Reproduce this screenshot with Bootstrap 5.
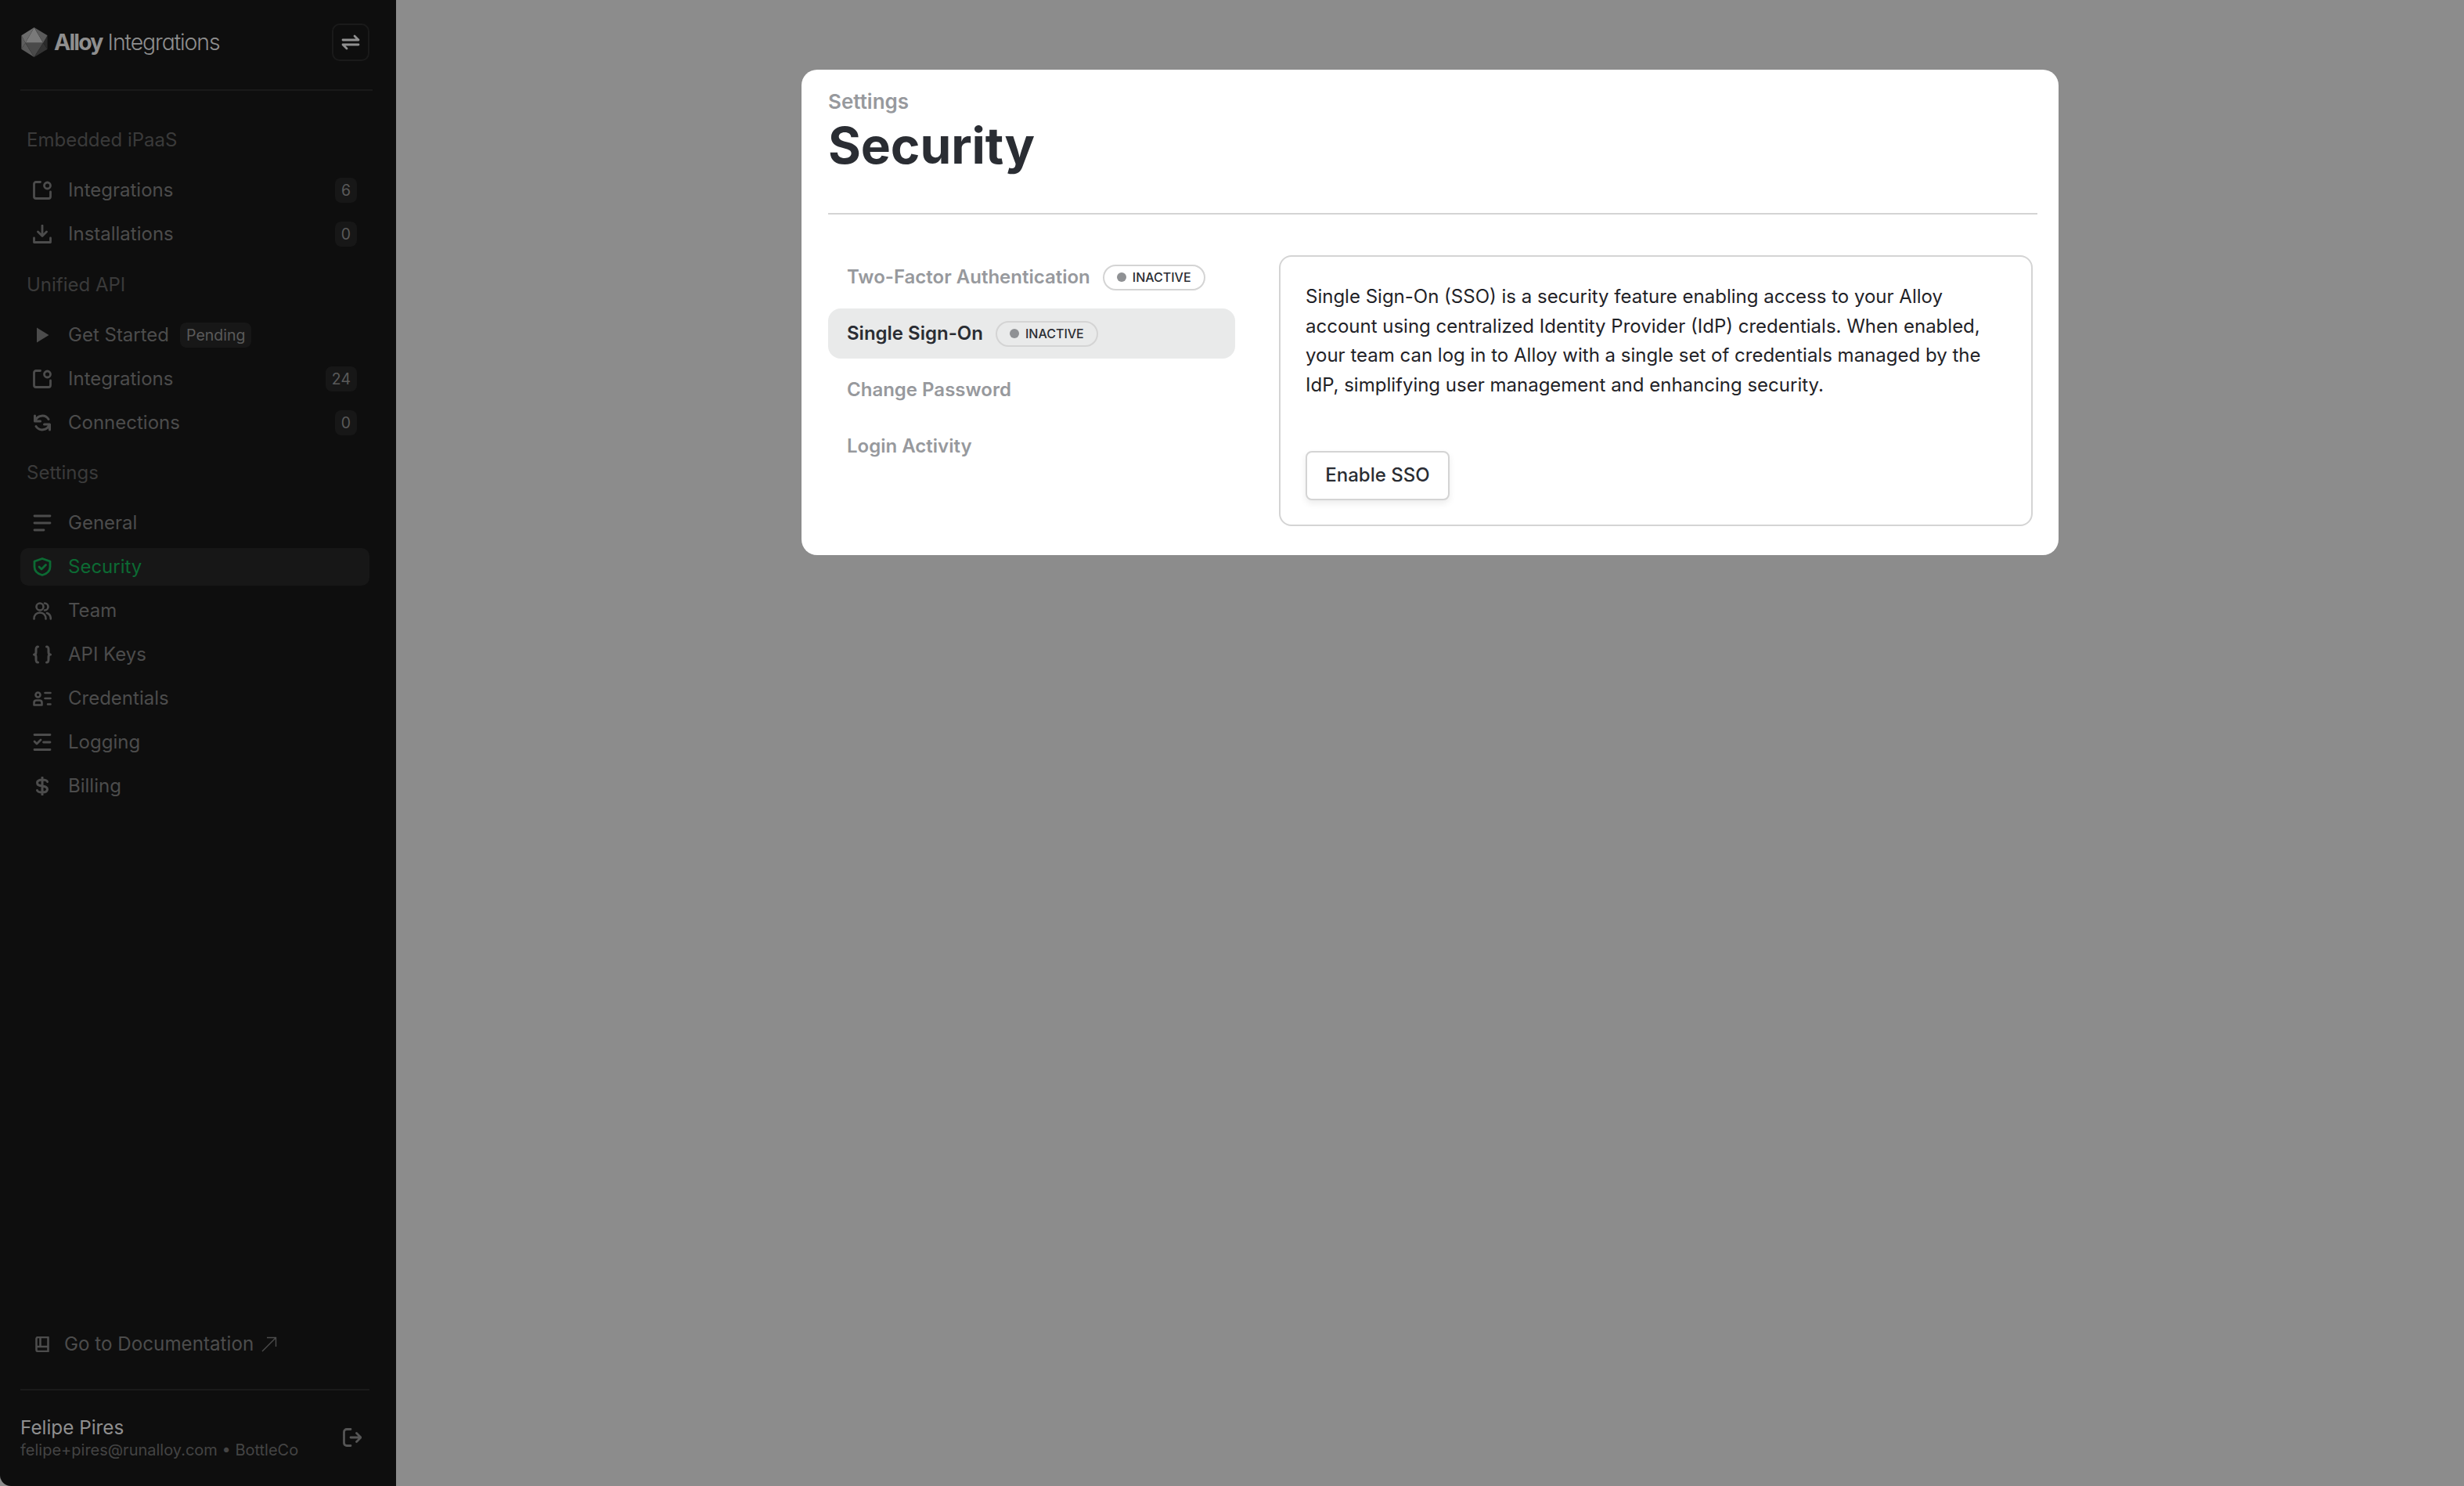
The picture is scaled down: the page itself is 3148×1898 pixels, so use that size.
<!DOCTYPE html>
<html lang="en">
<head>
  <meta charset="UTF-8">
  <title>Security - Alloy Integrations</title>
  <link href="https://cdn.jsdelivr.net/npm/bootstrap@5.3.0/dist/css/bootstrap.min.css" rel="stylesheet">
  <style>
    html, body { height: 100%; }
    body { background: #8c8c8c; font-family: Inter, "Liberation Sans", sans-serif; color: #2a2d33; overflow: hidden; }
    .shell { height: 100vh; }

    .side { width: 506px; background: #0e0e0e; padding: 30px 34px 0 26px; flex-shrink: 0; border-bottom-left-radius: 14px; }
    .brand { height: 48px; }
    .brand-logo { margin-left: 1px; }
    .brand-name { font-size: 28.4px; letter-spacing: -1.1px; color: #8f8f8f; line-height: 1; margin-left: 8px; font-feature-settings: "cv11"; }
    .brand-name b { font-weight: 700; color: #8f8f8f; letter-spacing: -1.8px; }
    .brand-name span { font-weight: 300; margin-left: 7px; }
    .swap-btn { width: 48px; height: 48px; border: 2px solid #1a1a1a; border-radius: 10px; color: #8f8f8f; padding: 0; }
    .side-rule { height: 2px; background: #1a1a1a; margin: 36px -4px 0 0; }
    .side-rule-low { height: 2px; background: #1a1a1a; }

    .group-label { font-size: 24px; line-height: 32px; color: #3a3a3a; padding-left: 8px; margin-bottom: 24px; }
    .group-label.first { margin-top: 47px; }
    .group-label.next { margin-top: 17px; }
    .group-label.last { margin-top: 16px; }
    .side-link { height: 48px; margin-bottom: 8px; padding: 0 16px; border-radius: 10px; color: #4c4c4c; font-size: 24px; gap: 21px; text-decoration: none; }
    .side-link svg { width: 24px; height: 24px; flex-shrink: 0; }
    .side-link.on { background: #171717; color: #0c6a33; }
    .count { background: #171717; color: #5a5a5a; font-size: 19.5px; font-weight: 400; line-height: 32px; height: 32px; padding: 0 8px; border-radius: 8px; }
    .count.tag { margin-left: -7px; }
    .doc-link { color: #4c4c4c; font-size: 24.2px; padding-left: 19px; gap: 19px; margin-bottom: 39px; text-decoration: none; }
    .doc-link svg.book { width: 18px; height: 20px; }
    .doc-link svg.arrow { width: 20px; height: 20px; margin-left: -9px; }
    .who { padding-top: 31px; height: 122px; }
    .who-name { font-size: 24.3px; line-height: 32px; color: #8f8f8f; }
    .who-mail { font-size: 20px; line-height: 26px; color: #444; }
    .logout { width: 24px; height: 24px; color: #555; margin-right: 10px; margin-top: 17px; }

    .dialog { width: 1606px; height: 620px; margin: 89px 0 0 518px; border: 0; border-radius: 20px; padding: 23px 27px 0 34px; }
    .crumb { font-size: 26px; line-height: 36px; font-weight: 600; color: #97999d; }
    .page-title { font-size: 64px; line-height: 76px; font-weight: 700; color: #2a2d33; margin: 0; letter-spacing: -.1px; }
    .dialog-rule { height: 2px; background: #d4d4d4; margin: 48px 0 52px; }
    .tabs-col { width: 520px; flex-shrink: 0; margin-right: 56px; margin-top: -4px; }
    .tab-row { height: 64px; margin-bottom: 8px; padding: 0 24px; border-radius: 16px; font-size: 24px; font-weight: 600; color: #97999d; gap: 16px; text-decoration: none; }
    .tab-row.on { background: #e9eaea; color: #2a2d33; }
    .state-pill { height: 33px; border: 2px solid #d4d4d4; border-radius: 17px; padding: 0 16px; font-size: 16px; font-weight: 500; color: #2a2d33; gap: 8px; background: transparent; }
    .state-dot { width: 12px; height: 12px; border-radius: 50%; background: #8f9194; }
    .sso-box { width: 963px; height: 346px; border: 2px solid #d4d4d4; border-radius: 16px; padding: 32px; }
    .sso-box p { font-size: 24px; line-height: 37.6px; color: #1f2227; margin: 0 0 66px; }
    .enable-btn { height: 63px; width: 184px; padding: 0 0 2px; font-size: 24px; font-weight: 500; color: #2a2d33; border: 2px solid #d4d4d4; border-radius: 8px; box-shadow: 0 4px 8px rgba(0,0,0,.08); background: #fff; }
  </style>
</head>
<body>
  <svg width="0" height="0" class="position-absolute">
    <symbol id="ic-box" viewBox="0 0 24 24"><path d="M9.500 1.500H4A2.500 2.500 0 0 0 1.500 4v16A2.500 2.500 0 0 0 4 22.500h16a2.500 2.500 0 0 0 2.500-2.500v-6" fill="none" stroke="currentColor" stroke-width="2.800" stroke-linecap="round"/><circle cx="18.500" cy="6" r="4" fill="none" stroke="currentColor" stroke-width="2.800"/></symbol>
  </svg>
  <div class="shell d-flex">
    <aside class="side d-flex flex-column">
      <div class="brand d-flex align-items-center justify-content-between">
        <div class="d-flex align-items-center">
          <svg class="brand-logo" width="34" height="38" viewBox="10 10 98 112">
            <path d="M58 10 25 68H92Z" fill="#7a7a7a"/>
            <path d="M58 10 10 40 25 68Z" fill="#6c6c6c"/>
            <path d="M10 40 25 68 10 92Z" fill="#5f5f5f"/>
            <path d="M10 92 25 68 58 122Z" fill="#5a5a5a"/>
            <path d="M25 68H92L58 122Z" fill="#4a4a4a"/>
            <path d="M92 68 108 92 58 122Z" fill="#333"/>
            <path d="M92 68 108 40V92Z" fill="#2a2a2a"/>
            <path d="M58 10 108 40 92 68Z" fill="#5a5a5a"/>
          </svg>
          <div class="brand-name"><b>Alloy</b><span>Integrations</span></div>
        </div>
        <button class="btn swap-btn d-flex align-items-center justify-content-center" type="button" aria-label="Switch">
          <svg width="24" height="24" viewBox="0 0 24 24" fill="none" stroke="currentColor" stroke-width="2.800" stroke-linecap="round" stroke-linejoin="round"><path d="M2 9h20M17 4l5 5M22 15H2M7 20l-5-5"/></svg>
        </button>
      </div>
      <div class="side-rule"></div>

      <div class="group-label first">Embedded iPaaS</div>
      <a class="side-link d-flex align-items-center" href="#"><svg><use href="#ic-box"/></svg><span class="flex-grow-1">Integrations</span><span class="badge count">6</span></a>
      <a class="side-link d-flex align-items-center" href="#">
        <svg viewBox="0 0 24 24" fill="none" stroke="currentColor" stroke-width="2.800" stroke-linecap="round" stroke-linejoin="round"><path d="M12 1v13M6.500 9l5.500 5.500L17.500 9M1.500 17v5.500h21V17"/></svg>
        <span class="flex-grow-1">Installations</span><span class="badge count">0</span></a>

      <div class="group-label next">Unified API</div>
      <a class="side-link d-flex align-items-center" href="#">
        <svg viewBox="0 0 24 24" fill="currentColor"><path d="M5 2.500 20.500 12 5 21.500Z"/></svg>
        <span>Get Started</span><span class="badge count tag">Pending</span></a>
      <a class="side-link d-flex align-items-center" href="#"><svg><use href="#ic-box"/></svg><span class="flex-grow-1">Integrations</span><span class="badge count">24</span></a>
      <a class="side-link d-flex align-items-center" href="#">
        <svg viewBox="0 0 24 24" fill="none" stroke="currentColor" stroke-width="3" stroke-linecap="round" stroke-linejoin="round"><path d="M3 9.500A9.500 9.500 0 0 1 20 7.500M21 14.500A9.500 9.500 0 0 1 4 16.500M2.500 3v7h7M21.500 21v-7h-7"/></svg>
        <span class="flex-grow-1">Connections</span><span class="badge count">0</span></a>

      <div class="group-label last">Settings</div>
      <a class="side-link d-flex align-items-center" href="#">
        <svg viewBox="0 0 24 24" fill="none" stroke="currentColor" stroke-width="2.800" stroke-linecap="round"><path d="M2 3h20M2 12h20M2 21h12"/></svg>
        <span>General</span></a>
      <a class="side-link on d-flex align-items-center" href="#">
        <svg viewBox="0 0 24 24" fill="none" stroke="currentColor" stroke-width="2.800" stroke-linecap="round" stroke-linejoin="round"><path d="M12 1.500 22 5v7c0 5.500-4.500 9-10 10.500C6.500 21 2 17.500 2 12V5Z"/><path d="m8 12 3 3 5.500-5.500"/></svg>
        <span>Security</span></a>
      <a class="side-link d-flex align-items-center" href="#">
        <svg viewBox="0 0 24 24" fill="none" stroke="currentColor" stroke-width="2.600" stroke-linecap="round" stroke-linejoin="round"><circle cx="9" cy="7" r="4.500"/><path d="M1.500 22.500c0-5 3-8 7.500-8s7.500 3 7.500 8"/><path d="M15 2.500a4.500 4.500 0 0 1 0 9M18 15c3 1 4.800 3.800 4.800 7.500"/></svg>
        <span>Team</span></a>
      <a class="side-link d-flex align-items-center" href="#">
        <svg viewBox="0 0 24 24" fill="none" stroke="currentColor" stroke-width="3" stroke-linecap="round" stroke-linejoin="round"><path d="M6.500 2C4 2 4 3.500 4 6v3c0 2-1 3-2.500 3C3 12 4 13 4 15v3c0 2.500 0 4 2.500 4M17.500 2C20 2 20 3.500 20 6v3c0 2 1 3 2.500 3-1.500 0-2.500 1-2.500 3v3c0 2.500 0 4-2.500 4"/></svg>
        <span>API Keys</span></a>
      <a class="side-link d-flex align-items-center" href="#">
        <svg viewBox="0 0 24 24" fill="none" stroke="currentColor" stroke-width="2.600" stroke-linecap="round" stroke-linejoin="round"><circle cx="6.500" cy="7.500" r="3"/><path d="M1.500 20.500v-3c0-2 1-3 3-3h4c2 0 3 1 3 3v3ZM15.500 5h7M15.500 12h7M19 19.500h3.500"/></svg>
        <span>Credentials</span></a>
      <a class="side-link d-flex align-items-center" href="#">
        <svg viewBox="0 0 24 24" fill="none" stroke="currentColor" stroke-width="2.800" stroke-linecap="round" stroke-linejoin="round"><path d="M2 2.500h20M2 21.500h20M13.500 12H22M2 11l3 3 5-5"/></svg>
        <span>Logging</span></a>
      <a class="side-link d-flex align-items-center" href="#">
        <svg viewBox="0 0 24 24" fill="none" stroke="currentColor" stroke-width="3" stroke-linecap="round" stroke-linejoin="round"><path d="M12 1v22M18.500 6.500C18 4.500 15.500 4 12 4S5.500 5 5.500 8 8.500 11.500 12 12s6.500 1 6.500 4-3 4-6.500 4-6-.5-6.500-2.500"/></svg>
        <span>Billing</span></a>

      <a class="doc-link d-flex align-items-center mt-auto" href="#">
        <svg class="book" viewBox="0 0 18 20" fill="none" stroke="currentColor" stroke-width="2.600" stroke-linejoin="round"><path d="M1.500 16V3A2 2 0 0 1 3.500 1h13v18h-13a2 2 0 0 1-2-2Zm0-3h15M6.500 1v12"/></svg>
        <span>Go to Documentation</span>
        <svg class="arrow" viewBox="0 0 20 20" fill="none" stroke="currentColor" stroke-width="1.400"><path d="M1 19 18.500 1.500M7 1.500h11.500V13"/></svg></a>
      <div class="side-rule-low"></div>
      <div class="who d-flex justify-content-between align-items-start">
        <div>
          <div class="who-name">Felipe Pires</div>
          <div class="who-mail">felipe+pires@runalloy.com • BottleCo</div>
        </div>
        <svg class="logout" viewBox="0 0 24 24" fill="none" stroke="currentColor" stroke-width="2.800" stroke-linecap="round" stroke-linejoin="round"><path d="M10 1.500H5a3.500 3.500 0 0 0-3.500 3.500v14A3.500 3.500 0 0 0 5 22.500h5M10 12h13M17.500 6.500 23 12l-5.500 5.500"/></svg>
      </div>
    </aside>

    <main class="flex-grow-1">
      <div class="card dialog">
        <div class="crumb">Settings</div>
        <h1 class="page-title">Security</h1>
        <div class="dialog-rule"></div>
        <div class="d-flex align-items-start">
          <div class="tabs-col">
            <a class="tab-row d-flex align-items-center" href="#">Two-Factor Authentication
              <span class="state-pill d-inline-flex align-items-center"><i class="state-dot"></i>INACTIVE</span></a>
            <a class="tab-row on d-flex align-items-center" href="#">Single Sign-On
              <span class="state-pill d-inline-flex align-items-center"><i class="state-dot"></i>INACTIVE</span></a>
            <a class="tab-row d-flex align-items-center" href="#">Change Password</a>
            <a class="tab-row d-flex align-items-center" href="#">Login Activity</a>
          </div>
          <div class="sso-box">
            <p>Single Sign-On (SSO) is a security feature enabling access to your Alloy account using centralized Identity Provider (IdP) credentials. When enabled, your team can log in to Alloy with a single set of credentials managed by the IdP, simplifying user management and enhancing security.</p>
            <button class="btn enable-btn" type="button">Enable SSO</button>
          </div>
        </div>
      </div>
    </main>
  </div>
</body>
</html>
